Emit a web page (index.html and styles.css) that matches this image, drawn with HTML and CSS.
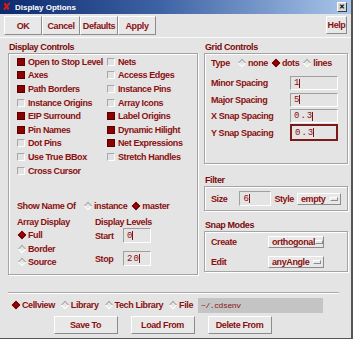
FILE: index.html
```html
<!DOCTYPE html>
<html lang="en">
<head>
    <meta charset="UTF-8">
    <title>Display Options</title>
    <link rel="stylesheet" href="styles.css">
</head>
<body>

<div class="window">
    <div class="titlebar">
        <span class="app-icon">&#x2718;</span>
        <span class="title">Display Options</span>
        <span class="close">&#x2715;</span>
    </div>

    <div class="toolbar">
        <div class="btn-group">
            <button class="btn btn-ok">OK</button>
            <button class="btn">Cancel</button>
            <button class="btn">Defaults</button>
            <button class="btn">Apply</button>
        </div>
        <button class="btn btn-help">Help</button>
    </div>

    <div class="main">
        <div class="left">
            <div class="group-label">Display Controls</div>
            <div class="box display-box">
                <div class="checks">
                    <div class="check on">Open to Stop Level</div>
                    <div class="check">Nets</div>
                    <div class="check on">Axes</div>
                    <div class="check">Access Edges</div>
                    <div class="check on">Path Borders</div>
                    <div class="check">Instance Pins</div>
                    <div class="check">Instance Origins</div>
                    <div class="check">Array Icons</div>
                    <div class="check on">EIP Surround</div>
                    <div class="check on">Label Origins</div>
                    <div class="check on">Pin Names</div>
                    <div class="check on">Dynamic Hilight</div>
                    <div class="check">Dot Pins</div>
                    <div class="check on">Net Expressions</div>
                    <div class="check">Use True BBox</div>
                    <div class="check">Stretch Handles</div>
                    <div class="check">Cross Cursor</div>
                </div>

                <div class="show-name">
                    <span class="field-name">Show Name Of</span>
                    <span class="radio">instance</span>
                    <span class="radio on">master</span>
                </div>

                <div class="levels">
                    <div class="array-col">
                        <div class="sub-label">Array Display</div>
                        <div class="radio on">Full</div>
                        <div class="radio">Border</div>
                        <div class="radio">Source</div>
                    </div>
                    <div class="levels-col">
                        <div class="sub-label">Display Levels</div>
                        <div class="level-row">
                            <span class="field-name level-name">Start</span>
                            <span class="input level-input">0<i class="caret"></i></span>
                        </div>
                        <div class="level-row">
                            <span class="field-name level-name">Stop</span>
                            <span class="input level-input">20<i class="caret"></i></span>
                        </div>
                    </div>
                </div>
            </div>
        </div>

        <div class="right">
            <div class="group-label">Grid Controls</div>
            <div class="box grid-box">
                <div class="type-row">
                    <span class="field-name type-name">Type</span>
                    <span class="radio">none</span>
                    <span class="radio on">dots</span>
                    <span class="radio">lines</span>
                </div>
                <div class="spacing-row">
                    <span class="field-name">Minor Spacing</span>
                    <span class="input spacing-input">1<i class="caret"></i></span>
                </div>
                <div class="spacing-row">
                    <span class="field-name">Major Spacing</span>
                    <span class="input spacing-input">5<i class="caret"></i></span>
                </div>
                <div class="spacing-row">
                    <span class="field-name">X Snap Spacing</span>
                    <span class="input spacing-input">0.3<i class="caret"></i></span>
                </div>
                <div class="spacing-row">
                    <span class="field-name">Y Snap Spacing</span>
                    <span class="input spacing-input focused">0.3<i class="caret"></i></span>
                </div>
            </div>

            <div class="group-label filter-label">Filter</div>
            <div class="box filter-box">
                <span class="field-name">Size</span>
                <span class="input size-input">6<i class="caret"></i></span>
                <span class="field-name">Style</span>
                <span class="dropdown style-drop">empty <i class="bar"></i></span>
            </div>

            <div class="group-label snap-label">Snap Modes</div>
            <div class="box snap-box">
                <div class="snap-row">
                    <span class="field-name">Create</span>
                    <span class="dropdown snap-drop">orthogonal <i class="bar"></i></span>
                </div>
                <div class="snap-row">
                    <span class="field-name">Edit</span>
                    <span class="dropdown snap-drop">anyAngle <i class="bar"></i></span>
                </div>
            </div>
        </div>
    </div>

    <div class="separator"></div>

    <div class="source-row">
        <span class="radio on">Cellview</span>
        <span class="radio">Library</span>
        <span class="radio">Tech Library</span>
        <span class="radio">File</span>
        <span class="file-input">~/.cdsenv</span>
    </div>

    <div class="actions">
        <button class="btn btn-action">Save To</button>
        <button class="btn btn-action">Load From</button>
        <button class="btn btn-action">Delete From</button>
    </div>
</div>

</body>
</html>
```

FILE: styles.css
```css
body {
    margin: 0;
    padding: 0;
    background: #e4e4e4;
    font-family: "Liberation Sans", Arial, sans-serif;
}
.window {
    width: 351px;
    height: 338px;
    background: #e4e4e4;
    border-right: 2px solid #555;
    border-bottom: 1px solid #555;
    color: #8a1010;
    font-size: 9px;
    font-weight: bold;
    letter-spacing: -0.4px;
    overflow: hidden;
}

/* title bar */
.titlebar {
    height: 14px;
    display: flex;
    align-items: center;
    background: linear-gradient(to right, #0c2a6e, #3d62a4 45%, #a9c6ea);
    color: #fff;
}
.app-icon {
    width: 11px;
    margin-left: 2px;
    color: #d01818;
    font-size: 10px;
    line-height: 14px;
}
.title {
    font-size: 8px;
    letter-spacing: 0;
    margin-left: 2px;
}
.close {
    margin-left: auto;
    margin-right: 4px;
    width: 8px;
    height: 8px;
    background: #d8d8d8;
    border: 1px solid #fff;
    border-right-color: #404040;
    border-bottom-color: #404040;
    color: #000;
    font-size: 7px;
    line-height: 8px;
    text-align: center;
}

/* buttons */
.btn {
    background: #e8e8e8;
    border: 1px solid #fff;
    border-right-color: #8c8c8c;
    border-bottom-color: #8c8c8c;
    color: #8a1010;
    font-family: inherit;
    font-size: 9px;
    font-weight: bold;
    letter-spacing: -0.4px;
    padding: 0;
    height: 19px;
}
.toolbar {
    height: 24px;
    display: flex;
    align-items: flex-start;
    padding: 2px 4px 0 4px;
    box-sizing: border-box;
    border-bottom: 1px solid #fafafa;
}
.btn-group {
    display: flex;
}
.btn-group .btn {
    width: 38px;
}
.btn-help {
    margin-left: auto;
    width: 21px;
    height: 18px;
}

/* group boxes */
.main {
    display: flex;
    padding-left: 8px;
    gap: 6px;
}
.left {
    width: 190px;
}
.right {
    width: 144px;
}
.group-label {
    height: 12px;
    line-height: 12px;
    margin-top: 3px;
    color: #7a0a0a;
    padding-left: 1px;
}
.box {
    border: 1px solid #a4a4a4;
    box-shadow: inset 1px 1px #fff, 1px 1px #fff;
    box-sizing: border-box;
}
.display-box {
    height: 222px;
    padding: 1px 0 0 8px;
}
.checks {
    display: grid;
    grid-template-columns: 90px 1fr;
    grid-auto-rows: 13.6px;
}
.check {
    display: flex;
    align-items: center;
    white-space: nowrap;
}
.check::before {
    content: "";
    width: 6px;
    height: 6px;
    margin-right: 3px;
    background: #e2e2e2;
    border: 1px solid #a8a8a8;
    border-right-color: #fff;
    border-bottom-color: #fff;
}
.check.on::before {
    background: #8c0000;
    border-color: #5a0000;
}

/* radio diamonds */
.radio {
    display: inline-flex;
    align-items: center;
    flex-shrink: 0;
    white-space: nowrap;
}
.radio::before {
    content: "";
    flex-shrink: 0;
    width: 4px;
    height: 4px;
    margin: 0 3px 0 2px;
    transform: rotate(45deg);
    background: #e6e6e6;
    border: 1px solid #a8a8a8;
    border-right-color: #fff;
    border-bottom-color: #fff;
}
.radio.on::before {
    background: #a00000;
    border-color: #600000;
}

.show-name {
    display: flex;
    align-items: center;
    height: 13px;
    margin-top: 22px;
}
.show-name .field-name {
    width: 66px;
}
.show-name .radio {
    margin-right: 4px;
}
.levels {
    display: flex;
    margin-top: 4px;
}
.sub-label {
    height: 12px;
    line-height: 12px;
}
.array-col {
    width: 78px;
}
.array-col .radio {
    display: flex;
    height: 13.5px;
}
.level-row {
    display: flex;
    align-items: center;
    height: 15px;
    margin-bottom: 8px;
}
.level-name {
    width: 28px;
}

/* text inputs */
.input {
    display: inline-flex;
    align-items: center;
    flex-shrink: 0;
    box-sizing: border-box;
    height: 14px;
    padding-left: 3px;
    border: 1px solid #a0a0a0;
    border-right-color: #fff;
    border-bottom-color: #fff;
    font-family: "Liberation Mono", monospace;
    font-weight: normal;
    font-size: 9px;
    letter-spacing: 1px;
    color: #8a1010;
}
.caret {
    display: inline-block;
    width: 1px;
    height: 9px;
    background: #8a1010;
    margin-left: -1px;
}
.level-input {
    width: 28px;
    height: 15px;
}

.grid-box {
    height: 111px;
    padding: 2px 0 0 6px;
}
.type-row {
    display: flex;
    align-items: center;
    height: 14px;
    margin-bottom: 5px;
}
.type-name {
    width: 26px;
    flex-shrink: 0;
}
.type-row .radio {
    margin-right: 3px;
}
.spacing-row {
    display: flex;
    align-items: center;
    justify-content: space-between;
    height: 16.5px;
    padding-right: 9px;
}
.spacing-input {
    width: 48px;
}
.spacing-input.focused {
    height: 17px;
    border: 2px solid #7a1a1a;
}

.filter-label {
    margin-top: 10px;
}
.filter-box {
    height: 25px;
    display: flex;
    align-items: center;
    padding-left: 6px;
}
.size-input {
    width: 32px;
    height: 15px;
    margin: 0 3px 0 12px;
}
.dropdown {
    display: inline-flex;
    align-items: center;
    justify-content: space-between;
    box-sizing: border-box;
    height: 12px;
    padding: 0 2px 0 3px;
    background: #e8e8e8;
    border: 1px solid #fff;
    border-right-color: #8c8c8c;
    border-bottom-color: #8c8c8c;
    white-space: nowrap;
}
.bar {
    flex-shrink: 0;
    width: 6px;
    height: 2px;
    border: 1px solid #fff;
    border-right-color: #8c8c8c;
    border-bottom-color: #8c8c8c;
}
.style-drop {
    width: 44px;
    margin-left: 3px;
}

.snap-label {
    margin-top: 8px;
}
.snap-box {
    height: 41px;
    padding: 4px 0 0 6px;
}
.snap-row {
    display: flex;
    align-items: center;
    height: 12px;
    margin-bottom: 8px;
}
.snap-row .field-name {
    width: 57px;
}
.snap-drop {
    width: 56px;
}

/* bottom */
.separator {
    margin: 17px 12px 0 8px;
    border-top: 1px solid #a8a8a8;
    border-bottom: 1px solid #fff;
}
.source-row {
    display: flex;
    align-items: center;
    height: 16px;
    margin-top: 3px;
    padding-left: 11px;
}
.source-row .radio {
    margin-right: 5px;
}
.file-input {
    width: 125px;
    height: 15px;
    box-sizing: border-box;
    padding-left: 3px;
    background: #c4c4c4;
    font-family: "Liberation Mono", monospace;
    font-weight: normal;
    font-size: 8px;
    line-height: 15px;
    color: #8a1010;
}
.actions {
    display: flex;
    justify-content: center;
    gap: 13px;
    margin-top: 3px;
    padding-right: 26px;
}
.btn-action {
    width: 64px;
    height: 18px;
}
```
